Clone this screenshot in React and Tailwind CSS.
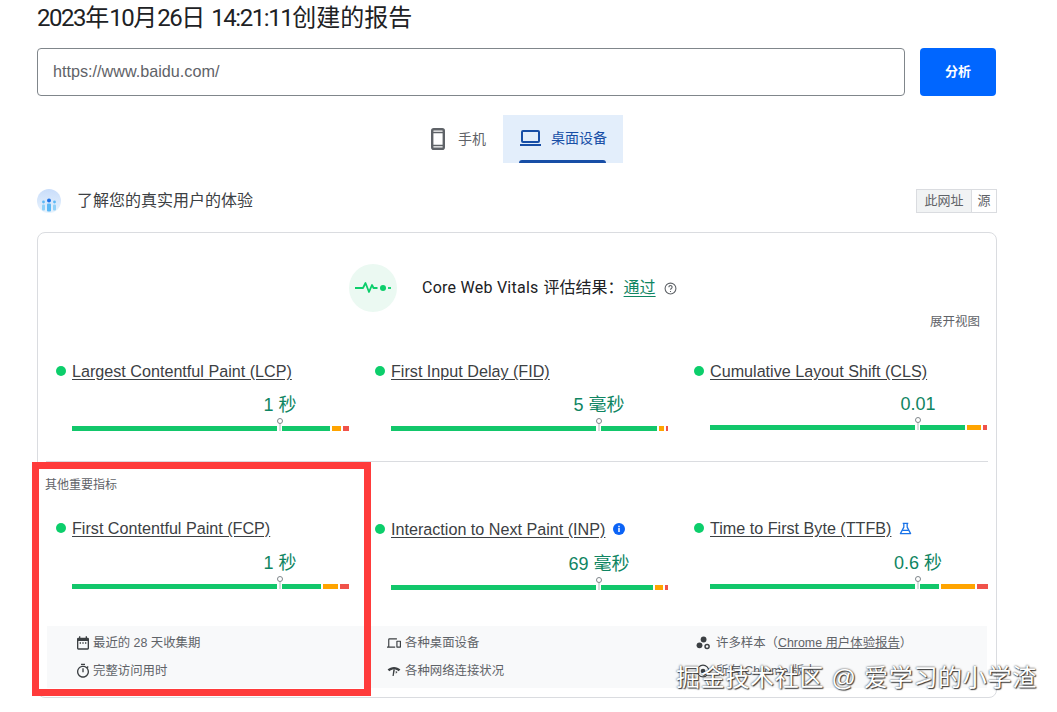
import React from "react";

const cjk = "font-['Liberation_Sans','Noto_Sans_CJK_SC',sans-serif]";

function Bar({ green, amber, red, top = "" }) {
  return (
    <div className={`relative flex h-[5px] w-[278px] gap-[2px] ${top}`}>
      <div className={`h-full bg-[#12c76b] ${green}`} />
      <div className={`h-full bg-[#ffa400] ${amber}`} />
      <div className={`h-full bg-[#f0524a] ${red}`} />
      <div className="absolute left-[205px] top-[-3px] flex h-[8px] w-[5px] justify-center bg-white">
        <div className="h-full w-[2px] bg-[#d5dedb]" />
      </div>
      <div className="absolute left-[205px] top-[-8px] h-[6px] w-[6px] rounded-full border border-[#80868b] bg-white" />
    </div>
  );
}

function Metric({ title, value, extra, titleTop = "mt-px", valueTop = "mt-[13px]", barTop = "mt-[9px]", green, amber, red }) {
  return (
    <div className="flex flex-col">
      <div className={`flex h-5 items-center gap-[6px] ${titleTop}`}>
        <span className="h-[10px] w-[10px] shrink-0 rounded-full bg-[#0cce6b]" />
        <span className="whitespace-nowrap text-[16.15px] leading-5 text-[#3c4043] underline underline-offset-[2px]">{title}</span>
        {extra}
      </div>
      <div className={`ml-[129px] h-6 w-[190px] text-center text-lg leading-6 text-[#0f8562] ${valueTop}`}>{value}</div>
      <div className="ml-4">
        <Bar green={green} amber={amber} red={red} top={barTop} />
      </div>
    </div>
  );
}

const Ico = ({ children, cls = "h-[16px] w-[16px]" }) => (
  <svg viewBox="0 0 24 24" className={`${cls} shrink-0`} fill="#3c4043">{children}</svg>
);

function Foot({ icon, children }) {
  return (
    <div className="flex h-7 items-center gap-[2px] whitespace-nowrap pt-[2px] text-[12.4px] text-[#5f6368]">
      {icon}
      <span>{children}</span>
    </div>
  );
}

const L = ({ children }) => <span className="tracking-[-1.45px]">{children}</span>;

export default function App() {
  return (
    <div className={`relative h-[712px] w-[1057px] overflow-hidden bg-white ${cjk}`}>
      <div className="w-[960px] ml-[37px]">
        <h1 className="h-9 whitespace-nowrap font-['Roboto','Noto_Sans_CJK_SC',sans-serif] text-2xl leading-9 text-[#202124]">
          <L>2023</L>年<L>10</L>月<L>26</L>日 <L>14:21:11</L>创建的报告
        </h1>

        <div className="mt-3 flex h-12 gap-[15px]">
          <div className="flex h-12 w-[868px] items-center rounded border border-[#80868b] pb-[2px] pl-[15px] text-[16.2px] text-[#5f6368]">
            https://www.baidu.com/
          </div>
          <button className="h-12 w-[76px] rounded bg-[#0066ff] text-[13px] font-bold text-white">分析</button>
        </div>

        <div className="ml-[386px] mt-[19px] flex h-12">
          <div className="flex h-12 w-[80px] items-center pb-[1px] pl-[8px]">
            <svg viewBox="0 0 14 22" className="h-[22px] w-[14px]" fill="none" stroke="#5f6368" strokeWidth="2.4">
              <rect x="1.2" y="1.2" width="11.6" height="19.6" rx="1.6" />
              <path d="M1 4.5h12M1 17.5h12" strokeWidth="1.6" />
            </svg>
            <span className="ml-[13px] text-sm text-[#5f6368]">手机</span>
          </div>
          <div className="relative flex h-12 w-[120px] items-center bg-[#e3eefb] pb-[2px] pl-[17px]">
            <svg viewBox="0 0 21 16" className="h-[16px] w-[21px]" fill="none" stroke="#174ea6" strokeWidth="2">
              <rect x="2" y="1" width="17" height="11" rx="1" />
              <path d="M0 15h21" />
            </svg>
            <span className="ml-[10px] text-sm text-[#174ea6]">桌面设备</span>
            <div className="absolute bottom-0 left-[16px] h-[3px] w-[87px] rounded-t-sm bg-[#174ea6]" />
          </div>
        </div>

        <div className="mt-[26px] flex h-6 items-center justify-between">
          <div className="flex items-center gap-4">
            <svg viewBox="0 0 24 24" className="h-6 w-6">
              <defs>
                <linearGradient id="sky" x1="0" y1="0" x2="0" y2="1">
                  <stop offset="0" stopColor="#c9ddfa" />
                  <stop offset="1" stopColor="#e8f3fd" />
                </linearGradient>
              </defs>
              <circle cx="12" cy="12" r="12" fill="url(#sky)" />
              <circle cx="12" cy="11.5" r="2" fill="#1a73e8" />
              <circle cx="6.5" cy="13" r="1.4" fill="#5bb8f5" />
              <circle cx="17.5" cy="13" r="1.4" fill="#5bb8f5" />
              <rect x="10" y="14.5" width="4" height="8" rx="1" fill="#5bb8f5" />
              <rect x="5" y="15.5" width="3" height="6" rx="1" fill="#8fd0f8" />
              <rect x="16" y="15.5" width="3" height="6" rx="1" fill="#8fd0f8" />
            </svg>
            <span className="text-base text-[#3c4043]">了解您的真实用户的体验</span>
          </div>
          <div className="flex h-6 w-[81px] border border-[#dadce0] text-[13px] leading-[22px] text-[#5f6368]">
            <span className="w-[55px] border-r border-[#dadce0] bg-[#f1f3f4] text-center">此网址</span>
            <span className="flex-1 text-center">源</span>
          </div>
        </div>

        <div className="mt-[19px] flex h-[466px] flex-col rounded-lg border border-[#dadce0]">
          <div className="mt-[31px] flex items-center gap-[25px] pl-[311px]">
            <div className="h-12 w-12 rounded-full bg-[#ebf9f2]">
              <svg viewBox="0 0 48 48" className="h-12 w-12" fill="none" stroke="#0cce6b" strokeWidth="1.8">
                <path d="M6 24h8l2.5-5 3.5 9 3-7 1.5 3h4" strokeLinejoin="round" />
                <circle cx="34" cy="24" r="3" fill="#0cce6b" stroke="none" />
                <path d="M39 24h3" />
              </svg>
            </div>
            <div className="flex items-center whitespace-nowrap font-['Roboto','Noto_Sans_CJK_SC',sans-serif] text-base text-[#202124]">
              <span className="tracking-[0.25px]">Core Web Vitals</span>
              <span className="ml-[5px]">评估结果：</span>
              <span className="text-[#0f8562] underline underline-offset-[3px]">通过</span>
              <svg viewBox="0 0 24 24" className="ml-2 h-[13px] w-[13px]" fill="none" stroke="#5f6368" strokeWidth="2">
                <circle cx="12" cy="12" r="10" />
                <path d="M9 9.5a3 3 0 1 1 4.6 2.5c-1 .7-1.6 1.2-1.6 2.5M12 16.5v2" />
              </svg>
            </div>
          </div>

          <div className="mt-[2px] flex h-4 justify-end pr-4 text-[12.5px] leading-4 text-[#5f6368]">展开视图</div>

          <div className="mt-[30px] grid h-[101px] grid-cols-[319px_319px_1fr] pl-[18px]">
            <Metric title="Largest Contentful Paint (LCP)" value="1 秒" valueTop="mt-[12px]" green="w-[258px]" amber="w-[9px]" red="w-[6px]" />
            <Metric title="First Input Delay (FID)" value="5 毫秒" valueTop="mt-[12px]" green="w-[266px]" amber="w-[5px]" red="w-[2px]" />
            <Metric title="Cumulative Layout Shift (CLS)" value="0.01" valueTop="mt-[11px]" green="w-[255px]" amber="w-[14px]" red="w-[4px]" />
          </div>

          <div className="mx-2 border-t border-[#dadce0]" />
          <div className="ml-[7px] mt-[15px] h-4 text-xs leading-4 text-[#5f6368]">其他重要指标</div>

          <div className="mt-[24px] grid h-[109px] grid-cols-[319px_319px_1fr] pl-[18px]">
            <Metric title="First Contentful Paint (FCP)" value="1 秒" green="w-[249px]" amber="w-[15px]" red="w-[9px]" />
            <Metric
              title="Interaction to Next Paint (INP)"
              value="69 毫秒"
              titleTop="mt-[2px]"
              green="w-[262px]"
              amber="w-[8px]"
              red="w-[3px]"
              extra={
                <svg viewBox="0 0 24 24" className="ml-[2px] h-3 w-3" fill="#0b63f6">
                  <circle cx="12" cy="12" r="12" />
                  <path d="M10.5 10h3v8h-3zM10.5 5.5h3v3h-3z" fill="#fff" />
                </svg>
              }
            />
            <Metric
              title="Time to First Byte (TTFB)"
              value="0.6 秒"
              green="w-[229px]"
              amber="w-[34px]"
              red="w-[11px]"
              extra={
                <svg viewBox="0 0 14 14" className="ml-[2px] h-[13px] w-[13px]" fill="none" stroke="#1a73e8" strokeWidth="1.4">
                  <path d="M4 1.5h6M5.2 1.5v4L1.5 12.5h11L8.8 5.5v-4" strokeLinejoin="round" />
                  <path d="M3.5 9h7" />
                </svg>
              }
            />
          </div>

          <div className="mx-[9px] grid h-[62px] grid-cols-[309px_312px_1fr] bg-[#f8f9fa] pt-[2px]">
            <div className="pl-[28px]">
              <Foot icon={<Ico><path d="M19 4h-1V2h-2v2H8V2H6v2H5a2 2 0 0 0-2 2v14a2 2 0 0 0 2 2h14a2 2 0 0 0 2-2V6a2 2 0 0 0-2-2zm0 16H5V9h14v11z" /><path d="M7 11h2v2H7zM11 11h2v2h-2zM15 11h2v2h-2z" /></Ico>}>最近的 28 天收集期</Foot>
              <Foot icon={<Ico><path d="M15 1H9v2h6V1zm-4 13h2V8h-2v6zm8.03-6.61l1.42-1.42c-.43-.51-.9-.99-1.41-1.41l-1.42 1.42C16.07 4.74 14.12 4 12 4c-4.97 0-9 4.03-9 9s4.02 9 9 9 9-4.03 9-9c0-2.12-.74-4.07-1.97-5.61zM12 20c-3.87 0-7-3.13-7-7s3.13-7 7-7 7 3.13 7 7-3.13 7-7 7z" /></Ico>}>完整访问用时</Foot>
            </div>
            <div className="pl-[29px]">
              <Foot icon={<Ico cls="h-[14px] w-[18px]"><path d="M4 6h13V4H4a2 2 0 0 0-2 2v12H0v2h14v-2H4V6zm19 2h-6a1 1 0 0 0-1 1v10a1 1 0 0 0 1 1h6a1 1 0 0 0 1-1V9a1 1 0 0 0-1-1zm-1 10h-4v-8h4v8z" /></Ico>}>各种桌面设备</Foot>
              <Foot icon={<Ico cls="h-[14px] w-[18px]"><path d="M1 9.5C4 6.5 8 5 12 5s8 1.5 11 4.5l-3 3C18 10.5 15 9.5 12 9.5S6 10.5 4 12.5l-3-3z" /><path d="M13.5 9.5l-2 11h-2l1.3-11z" /><path d="M15 12l3 1.5-3 3z" /></Ico>}>各种网络连接状况</Foot>
            </div>
            <div className="pl-[28px]">
              <Foot icon={<Ico cls="h-[14px] w-[14px]"><circle cx="13" cy="6" r="5" /><circle cx="6" cy="16" r="5" /><circle cx="19" cy="18" r="3.5" fill="none" stroke="#3c4043" strokeWidth="2.5" /></Ico>}>
                <span className="ml-[4px]">许多样本（<span className="underline">Chrome 用户体验报告</span>）</span>
              </Foot>
              <Foot icon={<Ico cls="h-[14px] w-[14px]"><circle cx="12" cy="12" r="10" fill="none" stroke="#3c4043" strokeWidth="2" /><circle cx="12" cy="12" r="4" /></Ico>}>
                <span className="ml-[4px]">所有 Chrome 版本</span>
              </Foot>
            </div>
          </div>
        </div>
      </div>

      {/* annotation box drawn over the screenshot */}
      <div className="absolute left-[32px] top-[462px] h-[234px] w-[339px] border-[7px] border-[#ff3b3b]" />

      {/* watermark */}
      <div className="absolute left-[676px] top-[664px] whitespace-nowrap text-2xl leading-7 tracking-[0.7px] text-white [text-shadow:0_0_2px_#222,1px_1px_1px_#444]">
        掘金技术社区 @ 爱学习的小学渣
      </div>
    </div>
  );
}
